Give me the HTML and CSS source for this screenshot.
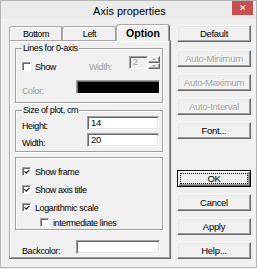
FILE: index.html
```html
<!DOCTYPE html>
<html>
<head>
<meta charset="utf-8">
<title>Axis properties</title>
<link rel="stylesheet" href="styles.css">
</head>
<body>
<div class="window">
  <div class="titlebar">
    <span class="title">Axis properties</span>
    <span class="close">&#x2715;</span>
  </div>
  <div class="client">
    <div class="tabbox">
      <div class="tabstrip">
        <div class="tab t-bottom">Bottom</div>
        <div class="tab t-left">Left</div>
        <div class="tab t-option active">Option</div>
      </div>
      <div class="panel">
        <div class="group g1">
          <span class="group-title">Lines for 0-axis</span>
          <div class="row r-show">
            <span class="check"><span class="box"></span><span>Show</span></span>
            <span class="lbl disabled w-lbl">Width:</span>
            <span class="spin">
              <span class="spin-text">2</span>
              <span class="spin-btns"><span class="sb up"></span><span class="sb down"></span></span>
            </span>
          </div>
          <div class="row r-color">
            <span class="lbl disabled c-lbl">Color:</span>
            <span class="swatch black"></span>
          </div>
        </div>
        <div class="group g2">
          <span class="group-title">Size of plot, cm</span>
          <div class="row r-field">
            <span class="lbl f-lbl">Height:</span>
            <span class="field">14</span>
          </div>
          <div class="row r-field r-field2">
            <span class="lbl f-lbl">Width:</span>
            <span class="field">20</span>
          </div>
        </div>
        <div class="group g3">
          <div class="check c-row"><span class="box on"></span><span>Show frame</span></div>
          <div class="check c-row"><span class="box on"></span><span>Show axis title</span></div>
          <div class="check c-row"><span class="box on"></span><span>Logarithmic scale</span></div>
          <div class="check c-row c-sub"><span class="box"></span><span>intermediate lines</span></div>
        </div>
        <div class="row r-back">
          <span class="lbl b-lbl">Backcolor:</span>
          <span class="swatch white"></span>
        </div>
      </div>
    </div>
    <div class="buttons">
      <div class="btn-group">
        <div class="btn b-default">Default</div>
        <div class="btn disabled">Auto-Minimum</div>
        <div class="btn disabled">Auto-Maximum</div>
        <div class="btn disabled">Auto-Interval</div>
        <div class="btn">Font...</div>
      </div>
      <div class="btn-group">
        <div class="btn ok"><span class="focus">OK</span></div>
        <div class="btn">Cancel</div>
        <div class="btn">Apply</div>
        <div class="btn">Help...</div>
      </div>
    </div>
  </div>
</div>
</body>
</html>
```

FILE: styles.css
```css
* { box-sizing: border-box; }
html, body { margin: 0; padding: 0; }
body {
  width: 257px;
  height: 269px;
  overflow: hidden;
  background: #f0f0f0;
  font-family: "Liberation Sans", Arial, sans-serif;
  font-size: 9px;
  letter-spacing: -0.4px;
  color: #000;
}
.window {
  width: 257px;
  height: 268px;
  border: 1px solid #b4b4b4;
  background: #f0f0f0;
  display: flex;
  flex-direction: column;
}
.titlebar {
  height: 18px;
  flex: none;
  background: #ebebeb;
  display: flex;
  justify-content: center;
  align-items: flex-start;
  position: relative;
}
.title {
  font-size: 11px;
  letter-spacing: 0;
  line-height: 20px;
  color: #000;
  margin-left: 2px;
}
.close {
  position: absolute;
  right: 3px;
  top: 0;
  width: 21px;
  height: 14px;
  background: #c75050;
  color: #fff;
  font-size: 9px;
  line-height: 14px;
  text-align: center;
  letter-spacing: 0;
}
.client {
  flex: 1;
  display: flex;
  padding: 5px 0 8px 7px;
  border-left: 1px solid #f7f7f7;
}
.tabbox {
  width: 162px;
  display: flex;
  flex-direction: column;
}
.tabstrip {
  height: 16px;
  display: flex;
  align-items: flex-end;
  flex: none;
}
.tab {
  height: 14px;
  border-top: 1px solid #a8a8a8;
  border-left: 1px solid #a8a8a8;
  border-right: 1px solid #696969;
  border-radius: 3px 3px 0 0;
  box-shadow: inset 1px 1px 0 #fff, inset -1px 0 0 #a0a0a0;
  text-align: center;
  line-height: 14px;
  font-size: 9px;
}
.t-bottom { width: 54px; }
.t-left { width: 55px; margin-left: -1px; }
.t-option {
  width: 54px;
  margin-left: -1px;
  height: 17px;
  margin-bottom: -1px;
  background: #f0f0f0;
  z-index: 1;
  font-weight: bold;
  font-size: 10.5px;
  letter-spacing: 0;
  line-height: 16px;
  border-bottom: none;
}
.panel {
  flex: 1;
  border-top: 1px solid #a8a8a8;
  border-left: 1px solid #a8a8a8;
  border-right: 1px solid #696969;
  border-bottom: 1px solid #696969;
  box-shadow: inset 1px 1px 0 #fff, inset -1px -1px 0 #a0a0a0;
  padding: 7px 7px 0 5px;
  display: flex;
  flex-direction: column;
}
.group {
  border: 1px solid #a0a0a0;
  box-shadow: inset 1px 1px 0 #fff, 1px 1px 0 #fff;
  padding: 0 0 0 6px;
  display: flex;
  flex-direction: column;
  flex: none;
}
.group-title {
  align-self: flex-start;
  margin: -6px 0 0 0;
  padding: 0 1px;
  background: #f0f0f0;
  line-height: 11px;
  height: 11px;
}
.g1 { height: 55px; }
.g2 { height: 42px; margin-top: 7px; }
.g3 { height: 73px; margin-top: 5px; padding-top: 3px; }
.row { display: flex; align-items: center; }
.lbl { line-height: 11px; }
.disabled { color: #a0a0a0; }
.check { display: flex; align-items: center; }
.box {
  width: 9px;
  height: 9px;
  flex: none;
  background: #fff;
  border-top: 1px solid #a0a0a0;
  border-left: 1px solid #a0a0a0;
  border-right: 1px solid #fff;
  border-bottom: 1px solid #fff;
  box-shadow: inset 1px 1px 0 #696969;
  margin-right: 4px;
  position: relative;
}
.box.on::after {
  content: "";
  position: absolute;
  left: 1px;
  top: 0px;
  width: 4px;
  height: 2px;
  border-left: 1.5px solid #000;
  border-bottom: 1.5px solid #000;
  transform: translate(0.5px, 1.5px) rotate(-45deg);
}
.r-show { margin-top: 6px; height: 13px; }
.w-lbl { margin-left: 33px; margin-top: 2px; }
.spin {
  display: flex;
  margin-left: 17px;
  margin-top: -8px;
  height: 13px;
}
.spin-text {
  width: 19px;
  height: 13px;
  background: #f0f0f0;
  border-top: 1px solid #a0a0a0;
  border-left: 1px solid #a0a0a0;
  border-right: 1px solid #fff;
  border-bottom: 1px solid #fff;
  box-shadow: inset 1px 1px 0 #696969;
  color: #a0a0a0;
  padding-left: 3px;
  line-height: 11px;
}
.spin-btns {
  width: 12px;
  display: flex;
  flex-direction: column;
}
.sb {
  flex: 1;
  border-top: 1px solid #fff;
  border-left: 1px solid #fff;
  border-right: 1px solid #696969;
  border-bottom: 1px solid #696969;
  box-shadow: inset -1px -1px 0 #a0a0a0;
  position: relative;
}
.sb::after {
  content: "";
  position: absolute;
  left: 3px;
  width: 0;
  height: 0;
  border-left: 2px solid transparent;
  border-right: 2px solid transparent;
}
.up::after { top: 1px; border-bottom: 2px solid #a0a0a0; }
.down::after { top: 1px; border-top: 2px solid #a0a0a0; }
.r-color { margin-top: 7px; height: 14px; align-items: flex-end; }
.c-lbl { width: 54px; margin-bottom: -3px; }
.swatch {
  width: 84px;
  height: 14px;
  border-top: 1px solid #a0a0a0;
  border-left: 1px solid #a0a0a0;
  border-right: 1px solid #fff;
  border-bottom: 1px solid #fff;
}
.swatch.black { background: #000; box-shadow: inset 1px 1px 0 #696969; }
.swatch.white { background: #fff; box-shadow: inset 1px 1px 0 #696969, inset -1px -1px 0 #e3e3e3; }
.r-field { margin-top: 0; height: 14px; align-items: flex-end; }
.r-field2 { margin-top: 3px; }
.f-lbl { width: 65px; margin-bottom: -2px; }
.field {
  width: 72px;
  height: 14px;
  background: #fff;
  border-top: 1px solid #a0a0a0;
  border-left: 1px solid #a0a0a0;
  border-right: 1px solid #fff;
  border-bottom: 1px solid #fff;
  box-shadow: inset 1px 1px 0 #696969, inset -1px -1px 0 #e3e3e3;
  padding-left: 3px;
  line-height: 12px;
  font-size: 9.5px;
}
.c-row { height: 13px; margin-top: 5px; }
.c-row:first-child { margin-top: 4px; }
.c-sub { padding-left: 18px; margin-top: 2px; }
.r-back { margin-top: 10px; padding-left: 7px; align-items: flex-end; height: 14px; }
.b-lbl { width: 54px; margin-bottom: -3px; }
.buttons {
  width: 74px;
  margin-left: 6px;
  margin-top: 1px;
  display: flex;
  flex-direction: column;
  justify-content: space-between;
}
.btn-group { display: flex; flex-direction: column; gap: 7px; }
.btn {
  height: 17px;
  border-top: 1px solid #fff;
  border-left: 1px solid #fff;
  border-right: 1px solid #696969;
  border-bottom: 1px solid #696969;
  box-shadow: inset -1px -1px 0 #a0a0a0, inset 1px 1px 0 #e3e3e3;
  text-align: center;
  line-height: 15px;
  font-size: 9.5px;
  letter-spacing: -0.3px;
}
.btn.disabled { color: #a0a0a0; text-shadow: 1px 1px 0 #fff; }
.b-default { margin-bottom: 1px; }
.btn.ok {
  border: 1px solid #000;
  box-shadow: inset 1px 1px 0 #fff, inset -1px -1px 0 #696969, inset -2px -2px 0 #a0a0a0;
  padding: 2px;
  display: flex;
}
.focus {
  flex: 1;
  border: 1px dotted #000;
  line-height: 9px;
}
```
